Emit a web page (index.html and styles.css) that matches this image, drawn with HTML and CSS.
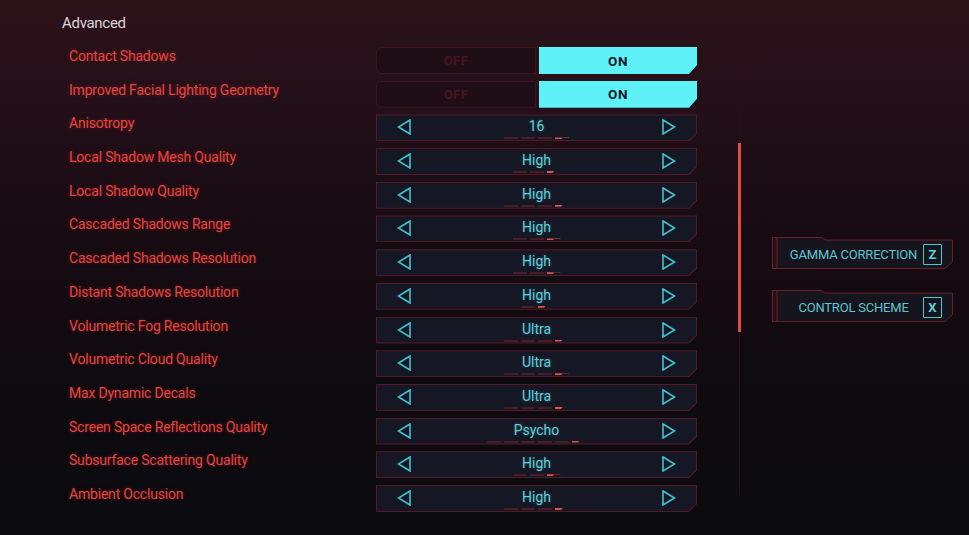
FILE: index.html
```html
<!DOCTYPE html>
<html lang="en">
<head>
<meta charset="utf-8">
<title>Advanced Graphics Settings</title>
<link rel="stylesheet" href="styles.css">
</head>
<body>
<div class="screen">
  <section class="panel">
    <h2 class="heading">Advanced</h2>
    <div class="rows">
      <div class="row">
        <span class="label">Contact Shadows</span>
        <div class="toggle">
          <div class="off"><div class="off-in">OFF</div></div>
          <div class="on">ON</div>
        </div>
      </div>
      <div class="row">
        <span class="label">Improved Facial Lighting Geometry</span>
        <div class="toggle">
          <div class="off"><div class="off-in">OFF</div></div>
          <div class="on">ON</div>
        </div>
      </div>
      <div class="row">
        <span class="label">Anisotropy</span>
        <div class="sel"><div class="sel-in">
          <svg class="arrow" viewBox="0 0 14 16"><polygon points="13,1 1.5,8 13,15"/></svg>
          <div class="val"><span class="txt">16</span><div class="segs"><i></i><i></i><i></i><i class="on"></i></div></div>
          <svg class="arrow" viewBox="0 0 14 16"><polygon points="1,1 12.5,8 1,15"/></svg>
        </div></div>
      </div>
      <div class="row">
        <span class="label">Local Shadow Mesh Quality</span>
        <div class="sel"><div class="sel-in">
          <svg class="arrow" viewBox="0 0 14 16"><polygon points="13,1 1.5,8 13,15"/></svg>
          <div class="val"><span class="txt">High</span><div class="segs"><i></i><i></i><i class="on"></i></div></div>
          <svg class="arrow" viewBox="0 0 14 16"><polygon points="1,1 12.5,8 1,15"/></svg>
        </div></div>
      </div>
      <div class="row">
        <span class="label">Local Shadow Quality</span>
        <div class="sel"><div class="sel-in">
          <svg class="arrow" viewBox="0 0 14 16"><polygon points="13,1 1.5,8 13,15"/></svg>
          <div class="val"><span class="txt">High</span><div class="segs"><i></i><i></i><i></i><i class="on"></i></div></div>
          <svg class="arrow" viewBox="0 0 14 16"><polygon points="1,1 12.5,8 1,15"/></svg>
        </div></div>
      </div>
      <div class="row">
        <span class="label">Cascaded Shadows Range</span>
        <div class="sel"><div class="sel-in">
          <svg class="arrow" viewBox="0 0 14 16"><polygon points="13,1 1.5,8 13,15"/></svg>
          <div class="val"><span class="txt">High</span><div class="segs"><i></i><i></i><i class="on"></i></div></div>
          <svg class="arrow" viewBox="0 0 14 16"><polygon points="1,1 12.5,8 1,15"/></svg>
        </div></div>
      </div>
      <div class="row">
        <span class="label">Cascaded Shadows Resolution</span>
        <div class="sel"><div class="sel-in">
          <svg class="arrow" viewBox="0 0 14 16"><polygon points="13,1 1.5,8 13,15"/></svg>
          <div class="val"><span class="txt">High</span><div class="segs"><i></i><i></i><i class="on"></i></div></div>
          <svg class="arrow" viewBox="0 0 14 16"><polygon points="1,1 12.5,8 1,15"/></svg>
        </div></div>
      </div>
      <div class="row">
        <span class="label">Distant Shadows Resolution</span>
        <div class="sel"><div class="sel-in">
          <svg class="arrow" viewBox="0 0 14 16"><polygon points="13,1 1.5,8 13,15"/></svg>
          <div class="val"><span class="txt">High</span><div class="segs"><i></i><i class="on"></i></div></div>
          <svg class="arrow" viewBox="0 0 14 16"><polygon points="1,1 12.5,8 1,15"/></svg>
        </div></div>
      </div>
      <div class="row">
        <span class="label">Volumetric Fog Resolution</span>
        <div class="sel"><div class="sel-in">
          <svg class="arrow" viewBox="0 0 14 16"><polygon points="13,1 1.5,8 13,15"/></svg>
          <div class="val"><span class="txt">Ultra</span><div class="segs"><i></i><i></i><i></i><i class="on"></i></div></div>
          <svg class="arrow" viewBox="0 0 14 16"><polygon points="1,1 12.5,8 1,15"/></svg>
        </div></div>
      </div>
      <div class="row">
        <span class="label">Volumetric Cloud Quality</span>
        <div class="sel"><div class="sel-in">
          <svg class="arrow" viewBox="0 0 14 16"><polygon points="13,1 1.5,8 13,15"/></svg>
          <div class="val"><span class="txt">Ultra</span><div class="segs"><i></i><i></i><i></i><i class="on"></i></div></div>
          <svg class="arrow" viewBox="0 0 14 16"><polygon points="1,1 12.5,8 1,15"/></svg>
        </div></div>
      </div>
      <div class="row">
        <span class="label">Max Dynamic Decals</span>
        <div class="sel"><div class="sel-in">
          <svg class="arrow" viewBox="0 0 14 16"><polygon points="13,1 1.5,8 13,15"/></svg>
          <div class="val"><span class="txt">Ultra</span><div class="segs"><i></i><i></i><i></i><i class="on"></i></div></div>
          <svg class="arrow" viewBox="0 0 14 16"><polygon points="1,1 12.5,8 1,15"/></svg>
        </div></div>
      </div>
      <div class="row">
        <span class="label">Screen Space Reflections Quality</span>
        <div class="sel"><div class="sel-in">
          <svg class="arrow" viewBox="0 0 14 16"><polygon points="13,1 1.5,8 13,15"/></svg>
          <div class="val"><span class="txt">Psycho</span><div class="segs"><i></i><i></i><i></i><i></i><i></i><i class="on"></i></div></div>
          <svg class="arrow" viewBox="0 0 14 16"><polygon points="1,1 12.5,8 1,15"/></svg>
        </div></div>
      </div>
      <div class="row">
        <span class="label">Subsurface Scattering Quality</span>
        <div class="sel"><div class="sel-in">
          <svg class="arrow" viewBox="0 0 14 16"><polygon points="13,1 1.5,8 13,15"/></svg>
          <div class="val"><span class="txt">High</span><div class="segs"><i></i><i></i><i class="on"></i></div></div>
          <svg class="arrow" viewBox="0 0 14 16"><polygon points="1,1 12.5,8 1,15"/></svg>
        </div></div>
      </div>
      <div class="row">
        <span class="label">Ambient Occlusion</span>
        <div class="sel"><div class="sel-in">
          <svg class="arrow" viewBox="0 0 14 16"><polygon points="13,1 1.5,8 13,15"/></svg>
          <div class="val"><span class="txt">High</span><div class="segs"><i></i><i></i><i></i><i class="on"></i></div></div>
          <svg class="arrow" viewBox="0 0 14 16"><polygon points="1,1 12.5,8 1,15"/></svg>
        </div></div>
      </div>
    </div>
  </section>

  <div class="track"><div class="thumb"></div></div>

  <aside class="side">
    <div class="btn">
      <svg class="btn-bg" viewBox="0 0 181 32" preserveAspectRatio="none">
        <polygon class="btn-shape" points="0.5,0.5 50,0.5 53,3 180.5,3 180.5,24.5 173,31.5 0.5,31.5"/>
        <polygon class="btn-strip" points="0.5,0.5 5,0.5 5,31.5 0.5,31.5"/>
      </svg>
      <div class="btn-content"><span class="btn-txt">GAMMA CORRECTION</span><span class="key">Z</span></div>
    </div>
    <div class="btn">
      <svg class="btn-bg" viewBox="0 0 181 32" preserveAspectRatio="none">
        <polygon class="btn-shape" points="0.5,0.5 50,0.5 53,3 180.5,3 180.5,24.5 173,31.5 0.5,31.5"/>
        <polygon class="btn-strip" points="0.5,0.5 5,0.5 5,31.5 0.5,31.5"/>
      </svg>
      <div class="btn-content"><span class="btn-txt">CONTROL SCHEME</span><span class="key">X</span></div>
    </div>
  </aside>
</div>
</body>
</html>
```

FILE: styles.css
```css
* { box-sizing: border-box; }

html, body {
  margin: 0;
  padding: 0;
  width: 969px;
  height: 535px;
  overflow: hidden;
  background: #0c0b10;
}

.screen {
  display: flex;
  width: 969px;
  height: 535px;
  font-family: "Roboto", "Liberation Sans", sans-serif;
  background: linear-gradient(180deg, #2d1219 0%, #24101a 18%, #170b12 45%, #0e0b10 72%, #0b0b0f 100%);
}

.panel {
  width: 712px;
  flex: none;
  padding: 14px 15px 0 62px;
}

.heading {
  margin: 0;
  font-size: 15px;
  line-height: 18px;
  font-weight: 400;
  letter-spacing: -0.3px;
  color: #dcd5d8;
}

.rows {
  margin-top: 15px;
  display: flex;
  flex-direction: column;
  gap: 6.7px;
}

.row {
  display: flex;
  height: 27px;
}

.label {
  width: 314px;
  flex: none;
  padding-left: 7px;
  font-size: 14px;
  line-height: 18px;
  letter-spacing: -0.2px;
  color: #e6453f;
  text-shadow: 0 0 4px rgba(229, 60, 60, 0.35);
  white-space: nowrap;
}

/* toggle */
.toggle {
  width: 321px;
  display: flex;
  gap: 3px;
}

.off {
  flex: 1;
  padding: 1px;
  background: #3c141b;
  clip-path: polygon(4px 0, 100% 0, 100% 100%, 4px 100%, 0 calc(100% - 4px), 0 4px);
}

.off-in {
  height: 100%;
  display: flex;
  align-items: center;
  justify-content: center;
  background: #1f0e15;
  color: #45171e;
  font-size: 13px;
  font-weight: 700;
  letter-spacing: 0.5px;
  clip-path: polygon(3.5px 0, 100% 0, 100% 100%, 3.5px 100%, 0 calc(100% - 3.5px), 0 3.5px);
}

.on {
  flex: 1;
  display: flex;
  align-items: center;
  justify-content: center;
  background: #5ef2f8;
  color: #15151f;
  font-size: 13.5px;
  font-weight: 700;
  letter-spacing: 0.6px;
  clip-path: polygon(0 0, 100% 0, 100% calc(100% - 9px), calc(100% - 8px) 100%, 0 100%);
}

/* selector */
.sel {
  width: 321px;
  padding: 1px;
  background: #541a23;
  clip-path: polygon(0 0, 100% 0, 100% calc(100% - 8px), calc(100% - 8px) 100%, 0 100%);
}

.sel-in {
  height: 100%;
  display: flex;
  align-items: center;
  padding: 0 20px 0 20px;
  background: #161724;
  clip-path: polygon(0 0, 100% 0, 100% calc(100% - 7.5px), calc(100% - 7.5px) 100%, 0 100%);
}

.arrow {
  width: 14px;
  height: 16px;
  flex: none;
  margin-top: -1px;
  fill: none;
  stroke: #3fc3cf;
  stroke-width: 1.6;
  stroke-linejoin: miter;
}

.val {
  flex: 1;
  align-self: stretch;
  display: flex;
  flex-direction: column;
  align-items: center;
  padding-top: 3px;
}

.txt {
  font-size: 14px;
  line-height: 16px;
  color: #5ccfdb;
  text-shadow: 0 0 3px rgba(92, 207, 219, 0.3);
}

.segs {
  margin-top: 3px;
  display: flex;
  gap: 3px;
}

.segs i {
  display: block;
  flex: none;
  width: 14px;
  height: 2px;
  background: #471c25;
}

.segs i.on {
  background: #e24f4f;
}

/* scroll track */
.track {
  flex: none;
  width: 3px;
  margin-left: 26px;
  margin-top: 25px;
  height: 470px;
  background: linear-gradient(90deg, transparent 1px, #2c0f16 1px, #2c0f16 2px, transparent 2px);
}

.thumb {
  margin-top: 118px;
  height: 189px;
  background: #e04a48;
}

/* side buttons */
.side {
  flex: none;
  margin-left: 31px;
  padding-top: 237px;
  display: flex;
  flex-direction: column;
  gap: 21px;
}

.btn {
  display: grid;
  width: 181px;
  height: 32px;
}

.btn-bg, .btn-content {
  grid-area: 1 / 1;
}

.btn-bg {
  width: 181px;
  height: 32px;
}

.btn-shape {
  fill: #16141d;
  stroke: #6a1e27;
  stroke-width: 1;
}

.btn-strip {
  fill: #2a0f16;
  stroke: #6a1e27;
  stroke-width: 1;
}

.btn-content {
  display: flex;
  align-items: center;
  padding: 2px 11px 0 16px;
  gap: 4px;
}

.btn-txt {
  flex: 1;
  text-align: center;
  font-size: 13px;
  color: #5ac6d2;
  letter-spacing: -0.2px;
  white-space: nowrap;
}

.key {
  width: 19px;
  height: 21px;
  flex: none;
  display: flex;
  align-items: center;
  justify-content: center;
  border: 1.5px solid #4fc6d2;
  border-radius: 1px;
  color: #5ccfdb;
  font-size: 13px;
  font-weight: 700;
}
```
